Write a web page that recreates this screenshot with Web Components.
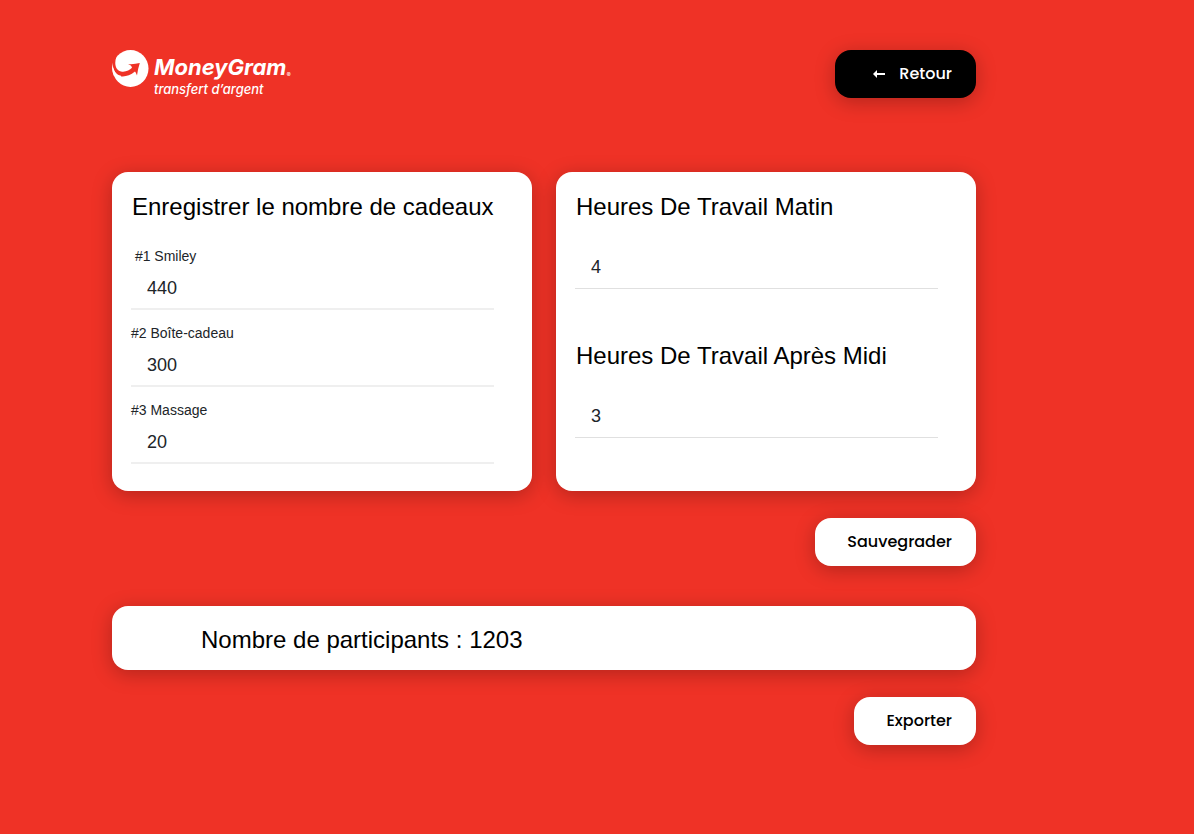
<!DOCTYPE html>
<html lang="fr">
<head>
<meta charset="utf-8">
<meta name="viewport" content="width=device-width, initial-scale=1">
<title>MoneyGram – Administration</title>
<style>
  html { min-height: 100%; background: #ef3226; }
  body { margin: 0; font-family: "Liberation Sans", Arial, sans-serif; color: #000; }
</style>
</head>
<body>
<admin-page></admin-page>
<script>
const define = (name, html, setup) => {
  const template = document.createElement('template');
  template.innerHTML = html;
  customElements.define(name, class extends HTMLElement {
    constructor() {
      super();
      this.attachShadow({ mode: 'open' }).append(template.content.cloneNode(true));
    }
    connectedCallback() {
      if (setup) setup(this, this.shadowRoot);
    }
  });
};

define('brand-logo', `
  <style>
    :host { display: flex; gap: 5px; color: #fff; font-family: Inter, Lato, sans-serif; font-style: italic; font-weight: 500; }
    svg { width: 37px; height: 37px; flex: none; }
    .words { display: flex; flex-direction: column; padding-top: 4px; }
    .name { display: flex; align-items: flex-end; font-size: 22px; line-height: 27px; font-weight: 700; }
    .name small { font-size: 6px; line-height: 12px; font-weight: 400; }
    .tag { font-size: 13px; line-height: 16px; }
  </style>
  <svg viewBox="0 0 37 37" aria-hidden="true">
    <ellipse cx="18.500" cy="18.500" rx="18" ry="18.500" fill="#fff"/>
    <path d="M-1 5 L4.300 7 C2.500 12 2.500 20 9 21.500 C13.500 22.300 17.500 20.500 20 17.800 C19.500 16 18.500 15 16 14 Q22 14.500 27.800 13 Q25.800 19 25 25.500 C24.300 23.500 23.800 22.500 23 21.500 C18 25.500 13 27 8.500 26.200 C3.500 25 0.800 19 .600 13 L-1 13Z" fill="#ef3226"/>
    <path d="M.300 12.500 C.500 20 4 25 9 25.800 L9 28 L2 26 C0 22 -.200 17 .300 12.500Z" fill="#fff"/>
  </svg>
  <div class="words">
    <span class="name">MoneyGram<small>®</small></span>
    <span class="tag">transfert d’argent</span>
  </div>`);

define('action-button', `
  <style>
    :host { display: inline-flex; }
    button {
      display: flex; align-items: center; gap: 14px; height: 48px; padding: 0 24px 0 32px;
      border: 0; border-radius: 16px; background: #fff; color: #000;
      box-shadow: 0 4px 20px rgba(0, 0, 0, .25);
      font: 500 16px/24px Poppins, Inter, sans-serif; cursor: pointer;
    }
    :host([dark]) button { background: #000; color: #fff; padding-left: 38px; }
  </style>
  <button type="button"><slot name="icon"></slot><slot></slot></button>`);

define('arrow-left', `
  <style>:host { display: flex; } svg { width: 12px; height: 8px; }</style>
  <svg viewBox="0 0 12 8" aria-hidden="true"><path d="M0 4 4 0V3H12V5H4V8Z" fill="#fff"/></svg>`);

define('surface-card', `
  <style>
    :host {
      display: block; box-sizing: border-box; border-radius: 16px; background: #fff;
      box-shadow: 0 4px 20px rgba(0, 0, 0, .25);
    }
  </style>
  <slot></slot>`);

define('card-title', `
  <style>
    :host { display: block; }
    h2 { margin: 0; font-size: 24px; line-height: 28px; font-weight: 400; }
  </style>
  <h2><slot></slot></h2>`);

define('number-field', `
  <style>
    :host { display: block; }
    label { display: block; font-size: 14px; line-height: 16px; color: #212529; white-space: pre; }
    input {
      display: block; box-sizing: border-box; width: 100%; height: 46px; margin: 0; padding: 4px 16px 0;
      border: 0; border-bottom: 2px solid #efefef; border-radius: 0; outline: 0; background: none;
      font: 18px/24px "Liberation Sans", Arial, sans-serif; color: #212529;
    }
    :host([plain]) label { display: none; }
    :host([plain]) input { border-bottom: 1px solid #e0e0e0; }
  </style>
  <label for="field"></label>
  <input id="field" type="text" inputmode="numeric">`,
  (host, root) => {
    const input = root.querySelector('input');
    input.value = host.getAttribute('value');
    if (host.hasAttribute('plain')) input.setAttribute('aria-label', host.getAttribute('label'));
    else root.querySelector('label').textContent = host.getAttribute('label');
  });

define('gift-form', `
  <style>
    :host { display: block; }
    surface-card { height: 100%; padding: 21px 38px 26px 19px; }
    card-title { padding-left: 1px; margin-bottom: 27px; }
    .fields { display: grid; gap: 15px; }
  </style>
  <surface-card>
    <card-title>Enregistrer le nombre de cadeaux</card-title>
    <div class="fields">
      <number-field label=" #1 Smiley" value="440"></number-field>
      <number-field label="#2 Boîte-cadeau" value="300"></number-field>
      <number-field label="#3 Massage" value="20"></number-field>
    </div>
  </surface-card>`);

define('hours-form', `
  <style>
    :host { display: block; }
    surface-card { height: 100%; padding: 21px 38px 53px 19px; }
    .groups { display: grid; gap: 53px; }
    card-title { padding-left: 1px; margin-bottom: 22px; }
  </style>
  <surface-card>
    <div class="groups">
      <section>
        <card-title>Heures De Travail Matin</card-title>
        <number-field plain label="Heures De Travail Matin" value="4"></number-field>
      </section>
      <section>
        <card-title>Heures De Travail Après Midi</card-title>
        <number-field plain label="Heures De Travail Après Midi" value="3"></number-field>
      </section>
    </div>
  </surface-card>`);

define('participant-count', `
  <style>
    :host { display: block; }
    surface-card { padding: 20px 89px 16px; }
  </style>
  <surface-card><card-title><slot></slot></card-title></surface-card>`);

define('admin-page', `
  <style>
    :host { display: block; box-sizing: border-box; max-width: 1088px; padding: 50px 112px; }
    header { display: flex; justify-content: space-between; align-items: flex-start; margin-bottom: 74px; }
    .forms { display: grid; grid-template-columns: repeat(auto-fit, minmax(320px, 1fr)); gap: 24px; }
    .actions { display: flex; justify-content: flex-end; margin-top: 27px; }
    participant-count { margin-top: 40px; }
  </style>
  <header>
    <brand-logo></brand-logo>
    <action-button dark><arrow-left slot="icon"></arrow-left>Retour</action-button>
  </header>
  <main>
    <div class="forms"><gift-form></gift-form><hours-form></hours-form></div>
    <div class="actions"><action-button>Sauvegrader</action-button></div>
    <participant-count>Nombre de participants : 1203</participant-count>
    <div class="actions"><action-button>Exporter</action-button></div>
  </main>`);
</script>
</body>
</html>
